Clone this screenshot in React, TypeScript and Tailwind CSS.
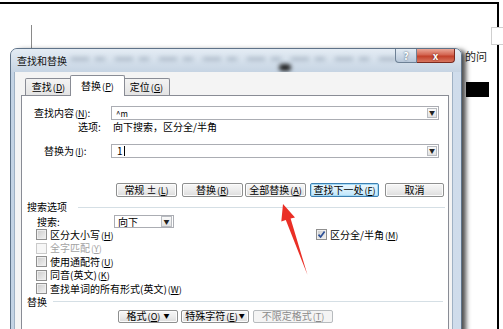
import clsx from "clsx";
import type { ReactNode } from "react";

const Key = ({ k }: { k: string }) => (
  <span className="ml-[1px] text-[9px]">
    (<span className="underline underline-offset-1">{k}</span>)
  </span>
);

const DropArrow = ({ box = "h-[10px] w-[10px]" }: { box?: string }) => (
  <div
    className={clsx(
      "flex items-center justify-center border border-[#b9bcc1] bg-[linear-gradient(#fafafa,#e2e2e2)]",
      box
    )}
  >
    <span className="text-[6px] leading-none text-[#222]">▼</span>
  </div>
);

const Combo = ({ width, children }: { width: string; children?: ReactNode }) => (
  <div
    className={clsx(
      "flex h-[14px] items-center border border-[#abadb3] bg-white pl-[3px] pr-px",
      width
    )}
  >
    <div className="flex-1 text-[10px] leading-none">{children}</div>
    <DropArrow />
  </div>
);

type BtnKind = "normal" | "focus" | "disabled";

const Btn = ({
  className,
  kind = "normal",
  children,
}: {
  className: string;
  kind?: BtnKind;
  children: ReactNode;
}) => (
  <div
    className={clsx(
      "flex items-center justify-center whitespace-nowrap rounded-[2px] border text-[10px] leading-none",
      kind === "focus" &&
        "border-[#3c7fb1] bg-[linear-gradient(#eaf6fd,#d9f0fc_50%,#bee6fd)] shadow-[inset_0_0_0_1px_#a6dbf6]",
      kind === "disabled" && "border-[#b7bbbe] bg-[#f4f4f4] text-[#8b8b8b]",
      kind === "normal" &&
        "border-[#8e8f8f] bg-[linear-gradient(#f7f7f7,#ececec_50%,#dcdcdc)] shadow-[inset_0_0_0_1px_#fcfcfc]",
      className
    )}
  >
    {children}
  </div>
);

type CheckState = "off" | "disabled" | "on";

const Check = ({ state = "off" }: { state?: CheckState }) => (
  <span
    className={clsx(
      "flex h-[11px] w-[11px] shrink-0 items-center justify-center border",
      state === "disabled"
        ? "border-[#cacaca] bg-[#f6f6f6]"
        : "border-[#8f8f8f] bg-[linear-gradient(135deg,#cbcbcb,#f3f3f3)] shadow-[inset_0_0_0_1px_#eeeeee]"
    )}
  >
    {state === "on" && (
      <svg viewBox="0 0 9 9" className="h-[9px] w-[9px]">
        <path d="M1.5 4.6 L3.6 7 L7.6 1.4" fill="none" stroke="#2b4f97" strokeWidth="1.7" />
      </svg>
    )}
  </span>
);

const CheckItem = ({
  label,
  k,
  state = "off",
}: {
  label: string;
  k: string;
  state?: CheckState;
}) => (
  <div className="flex items-center gap-[3px]">
    <Check state={state} />
    <span
      className={clsx(
        "whitespace-nowrap text-[10px] leading-none",
        state === "disabled" && "text-[#a3a3a3]"
      )}
    >
      {label}
      <Key k={k} />
    </span>
  </div>
);

const Section = ({ title, line }: { title: string; line: string }) => (
  <div className="flex h-[12px] items-center pl-[5px]">
    <span className="whitespace-nowrap text-[10px] leading-none">{title}</span>
    <div className={clsx("h-px flex-1 bg-[#d5dfe5]", line)} />
  </div>
);

const Tab = ({ label, k, active }: { label: string; k: string; active?: boolean }) => (
  <div
    className={clsx(
      "flex items-center justify-center whitespace-nowrap rounded-t-[2px] border border-b-0 border-[#898c95] text-[10px] leading-none",
      active
        ? "relative z-10 -mx-[2px] -mb-px h-[21px] w-[55px] bg-white"
        : "h-[17px] w-[47px] bg-[linear-gradient(#f3f3f3,#e4e4e4)]"
    )}
  >
    {label}
    <Key k={k} />
  </div>
);

const TitleBar = () => (
  <div className="relative flex h-[23px] items-start justify-between overflow-hidden rounded-t-[6px] bg-[linear-gradient(180deg,#e4ecf4,#c6d4e3)]">
    {/* blurred document behind the glass */}
    <div className="absolute left-[60px] top-[8px] h-[4px] w-[330px] bg-[repeating-linear-gradient(90deg,#8797a8_0_18px,transparent_18px_24px,#8797a8_24px_34px,transparent_34px_44px)] opacity-45 blur-[2px]" />
    <div className="absolute left-[268px] top-[15px] h-[7px] w-[12px] rounded-full bg-[#222] blur-[2px]" />
    <span className="relative ml-[6px] mt-[6px] text-[10px] leading-[12px] text-[#111]">
      查找和替换
    </span>
    <div className="relative mr-[6px] flex">
      <div className="flex h-[14px] w-[22px] items-center justify-center rounded-bl-[4px] border border-t-0 border-[#6d8095] bg-[linear-gradient(#e4ecf4,#b7c7d9)] text-[10px] font-bold leading-none text-white [text-shadow:0_0_2px_#34475c]">
        ?
      </div>
      <div className="flex h-[14px] w-[38px] items-center justify-center rounded-br-[4px] border border-l-0 border-t-0 border-[#7b2a1f] bg-[linear-gradient(#eba797,#d36450_45%,#c2402a_55%,#d8765f)] text-[10px] font-bold leading-none text-white [text-shadow:0_0_2px_#5a1208]">
        x
      </div>
    </div>
  </div>
);

export default function App() {
  return (
    <div className="relative h-[329px] w-[503px] overflow-hidden bg-white font-['Noto_Sans_CJK_SC',sans-serif] text-black">
      {/* Word page behind the dialog */}
      <div className="absolute left-0 top-[2px] h-[2px] w-[499px] bg-black" />
      <div className="absolute left-[497px] top-[2px] h-[327px] w-[2px] bg-black" />
      <div className="absolute left-[491px] top-[27px] h-[18px] w-[14px] border border-[#cfcfcf] bg-white" />
      <div className="absolute left-[31px] top-[25px] h-[23px] w-px bg-[#8a8a8a]" />
      <div className="absolute left-[465px] top-[50px] text-[11px] leading-[13px] text-[#222]">
        的问
      </div>
      <div className="absolute left-[466px] top-[82px] h-[15px] w-[23px] bg-black" />

      {/* dialog window */}
      <div className="absolute left-[10px] top-[48px] flex h-[290px] w-[452px] flex-col rounded-t-[7px] border border-[#5f7389] bg-[linear-gradient(90deg,#c3d3e4,#dbe5ef_30%,#cfdceb)] shadow-[5px_1px_5px_-1px_rgba(0,0,0,0.7)]">
        <TitleBar />
        <div className="ml-[3px] mr-[8px] flex flex-1 flex-col border-l border-r border-[#9fb1c4] bg-[#f4f4f4]">
          <div className="flex h-[23px] items-end pl-[10px]">
            <Tab label="查找" k="D" />
            <Tab label="替换" k="P" active />
            <Tab label="定位" k="G" />
          </div>

          <div className="ml-[6px] mr-[3px] flex flex-1 flex-col border border-[#898c95] bg-white">
            <div className="mt-[10px] flex items-center">
              <span className="w-[89px] whitespace-nowrap pl-[12px] text-[10px] leading-none">
                查找内容<Key k="N" />:
              </span>
              <Combo width="w-[328px]">
                <span className="pl-px text-[8px]">^m</span>
              </Combo>
            </div>
            <div className="mt-px flex h-[12px] items-center">
              <span className="w-[91px] pl-[56px] text-[10px] leading-none">选项:</span>
              <span className="text-[10px] leading-none">向下搜索，区分全/半角</span>
            </div>
            <div className="mt-[11px] flex items-center">
              <span className="w-[89px] whitespace-nowrap pl-[22px] text-[10px] leading-none">
                替换为<Key k="I" />:
              </span>
              <Combo width="w-[328px]">
                <span className="flex items-center pl-[2px] text-[10px]">
                  1<span className="ml-px h-[10px] w-px bg-black" />
                </span>
              </Combo>
            </div>

            <div className="mt-[25px] flex items-center pl-[94px]">
              <Btn className="h-[14px] w-[61px]">
                常规 ± <Key k="L" />
              </Btn>
              <Btn className="ml-[5px] h-[14px] w-[61px]">
                替换<Key k="R" />
              </Btn>
              <Btn className="ml-[2px] h-[14px] w-[61px]">
                全部替换<Key k="A" />
              </Btn>
              <Btn className="ml-[4px] h-[14px] w-[69px]" kind="focus">
                查找下一处<Key k="F" />
              </Btn>
              <Btn className="ml-[6px] h-[14px] w-[59px]">取消</Btn>
            </div>

            <div className="mt-[4px]">
              <Section title="搜索选项" line="ml-[11px] mr-[3px]" />
            </div>
            <div className="mt-[2px] flex h-[13px] items-center">
              <span className="w-[92px] pl-[15px] text-[10px] leading-none">搜索:</span>
              <div className="flex h-[13px] w-[60px] items-center border border-[#abadb3] bg-white pl-[3px] pr-px">
                <span className="flex-1 text-[10px] leading-none">向下</span>
                <DropArrow box="h-[11px] w-[11px]" />
              </div>
            </div>

            <div className="flex flex-col pl-[14px]">
              <div className="flex h-[13.5px] items-center">
                <div className="w-[280px]">
                  <CheckItem label="区分大小写" k="H" />
                </div>
                <CheckItem label="区分全/半角" k="M" state="on" />
              </div>
              <div className="flex h-[13.5px] items-center">
                <CheckItem label="全字匹配" k="Y" state="disabled" />
              </div>
              <div className="flex h-[13.5px] items-center">
                <CheckItem label="使用通配符" k="U" />
              </div>
              <div className="flex h-[13.5px] items-center">
                <CheckItem label="同音(英文)" k="K" />
              </div>
              <div className="flex h-[13.5px] items-center">
                <CheckItem label="查找单词的所有形式(英文)" k="W" />
              </div>
            </div>

            <Section title="替换" line="ml-[6px] mr-[5px]" />

            <div className="mt-[2px] flex items-center pl-[96px]">
              <Btn className="h-[13px] w-[60px]">
                格式<Key k="O" />
                <span className="ml-[3px] text-[6px]">▼</span>
              </Btn>
              <Btn className="ml-[3px] h-[13px] w-[68px]">
                特殊字符<Key k="E" />
                <span className="ml-px text-[6px]">▼</span>
              </Btn>
              <Btn className="ml-[4px] h-[13px] w-[80px]" kind="disabled">
                不限定格式<Key k="T" />
              </Btn>
            </div>
          </div>
        </div>
      </div>

      {/* red pointer arrow */}
      <svg
        className="absolute left-[270px] top-[198px] h-[82px] w-[45px]"
        viewBox="0 0 45 82"
      >
        <path
          d="M13 6 L25 19.5 L20.6 20.6 L37.5 77 L15.8 22 L11.3 23.6 Z"
          fill="#ea2f26"
        />
      </svg>
    </div>
  );
}
